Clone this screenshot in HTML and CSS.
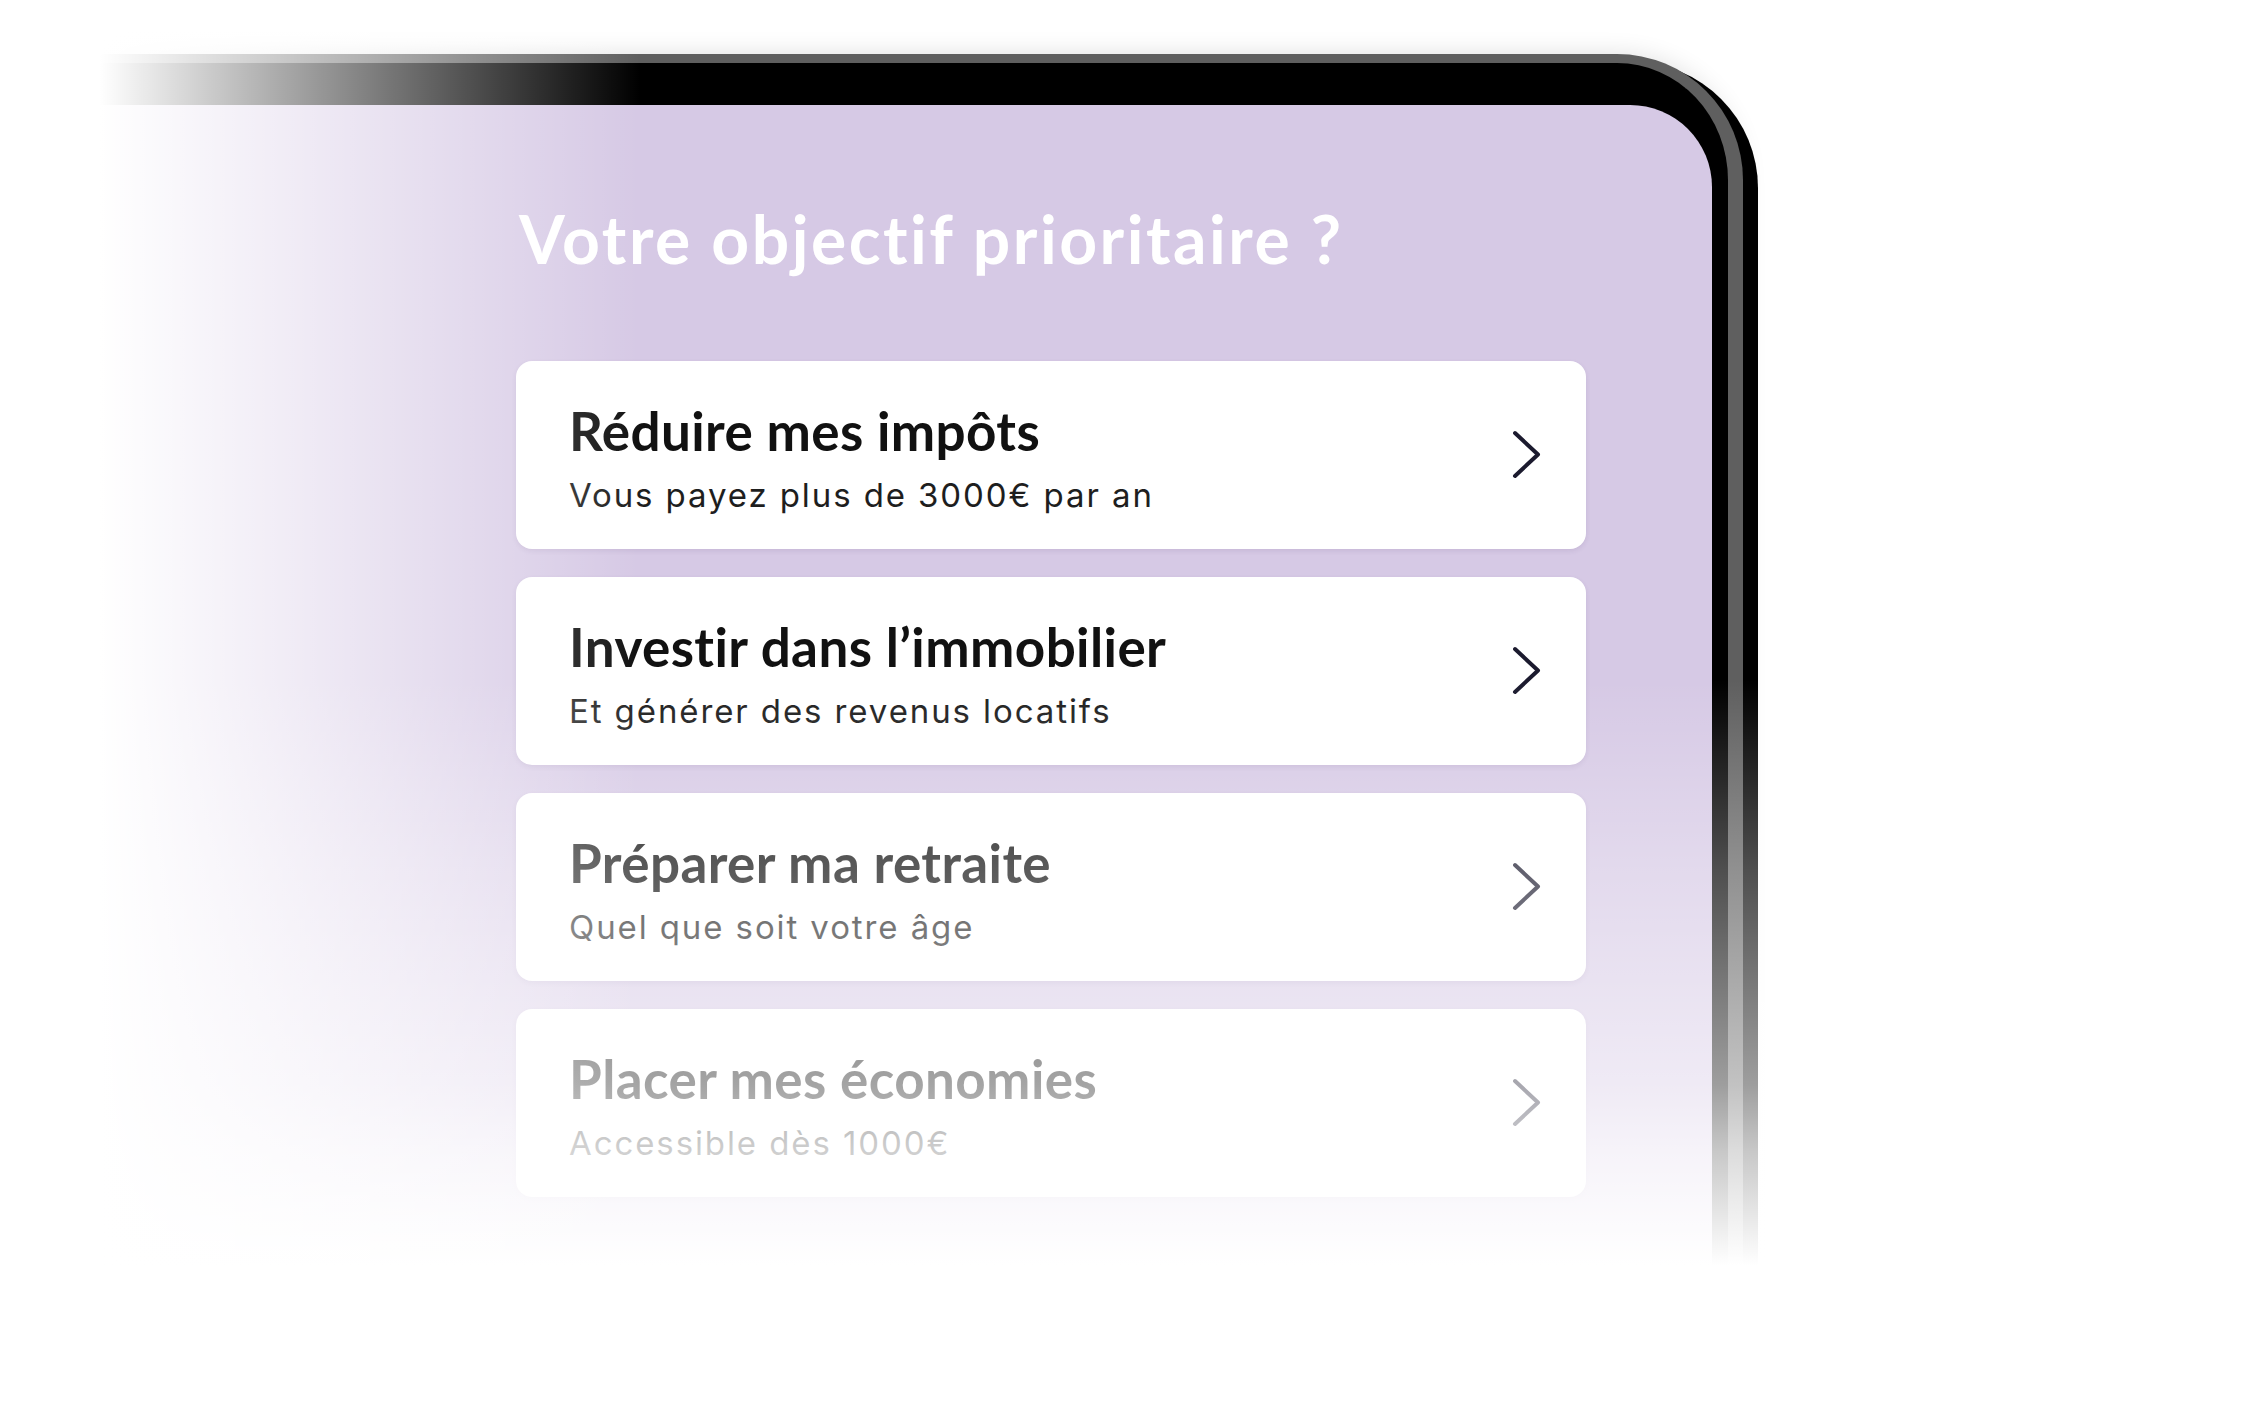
FILE: index.html
```html
<!DOCTYPE html>
<html lang="fr">

<head>
  <meta charset="UTF-8" />
  <meta name="viewport" content="width=device-width, initial-scale=1.0" />
  <title>Votre objectif prioritaire ?</title>
  <link rel="stylesheet" href="styles.css">
</head>

<body>
  <div class="stage">
    <div class="device">
      <div class="screen">
        <h1 class="question">Votre objectif prioritaire ?</h1>

        <ul class="choices">
          <li class="choice">
            <div class="choice-text">
              <span class="choice-title">Réduire mes impôts</span>
              <span class="choice-sub">Vous payez plus de 3000€ par an</span>
            </div>
            <svg class="chevron" width="30" height="50" viewBox="0 0 30 50">
              <path d="M3 3 L26 24.5 L3 46" />
            </svg>
          </li>
          <li class="choice">
            <div class="choice-text">
              <span class="choice-title">Investir dans l’immobilier</span>
              <span class="choice-sub">Et générer des revenus locatifs</span>
            </div>
            <svg class="chevron" width="30" height="50" viewBox="0 0 30 50">
              <path d="M3 3 L26 24.5 L3 46" />
            </svg>
          </li>
          <li class="choice">
            <div class="choice-text">
              <span class="choice-title">Préparer ma retraite</span>
              <span class="choice-sub">Quel que soit votre âge</span>
            </div>
            <svg class="chevron" width="30" height="50" viewBox="0 0 30 50">
              <path d="M3 3 L26 24.5 L3 46" />
            </svg>
          </li>
          <li class="choice">
            <div class="choice-text">
              <span class="choice-title">Placer mes économies</span>
              <span class="choice-sub">Accessible dès 1000€</span>
            </div>
            <svg class="chevron" width="30" height="50" viewBox="0 0 30 50">
              <path d="M3 3 L26 24.5 L3 46" />
            </svg>
          </li>
        </ul>
      </div>
    </div>

    <!-- white fade on the left and bottom -->
    <div class="fade"></div>
  </div>
</body>

</html>
```
FILE: styles.css
```css
* {
  box-sizing: border-box;
}

body {
  margin: 0;
  background: #fff;
  font-family: 'Lato', sans-serif;
  overflow: hidden;
}

.stage {
  position: relative;
  width: 2249px;
  height: 1402px;
  overflow: hidden;
}

.device {
  width: 1643px;
  height: 1400px;
  margin: 54px 0 0 100px;
  background: #000;
  border-top: 9px solid #5f5f5f;
  border-right: 15px solid #5f5f5f;
  border-radius: 0 126px 0 0;
  padding: 42px 16px 0 0;
  box-shadow: 15px 8px 0 #000, 0 0 24px rgba(0, 0, 0, 0.12);
}

.screen {
  height: 100%;
  background: #d6c9e5;
  border-radius: 0 82px 0 0;
  padding: 94px 0 0 416px;
}

.question {
  margin: 0 0 83px 3px;
  font-family: 'Lato', sans-serif;
  font-size: 66px;
  font-weight: 700;
  line-height: 1.2;
  color: #fff;
  letter-spacing: 2.5px;
  font-variant-ligatures: none;
}

.choices {
  list-style: none;
  margin: 0;
  padding: 0;
  width: 1070px;
  display: flex;
  flex-direction: column;
  gap: 28px;
}

.choice {
  height: 188px;
  display: flex;
  align-items: center;
  justify-content: space-between;
  padding: 0 44px 0 53px;
  background: #fff;
  border-radius: 16px;
  box-shadow: 0 2px 5px rgba(70, 40, 100, 0.1);
}

.choice-text {
  display: flex;
  flex-direction: column;
  gap: 13px;
  padding-top: 4px;
}

.choice-title {
  font-family: 'Lato', sans-serif;
  font-size: 53px;
  font-weight: 700;
  line-height: 1.2;
  color: #111;
  letter-spacing: 0.4px;
  font-variant-ligatures: none;
}

.choice-sub {
  font-family: 'Inter', sans-serif;
  font-size: 33px;
  line-height: 1.2;
  color: #1e1e1e;
  letter-spacing: 1.9px;
}

.chevron path {
  fill: none;
  stroke: #1b1a2e;
  stroke-width: 4;
  stroke-linecap: round;
  stroke-linejoin: round;
}

.fade {
  position: absolute;
  inset: 0;
  pointer-events: none;
  background:
    linear-gradient(to right, #fff 100px, rgba(255, 255, 255, 0) 640px),
    linear-gradient(to bottom,
      rgba(255, 255, 255, 0) 680px,
      rgba(255, 255, 255, 0.3) 865px,
      rgba(255, 255, 255, 0.62) 1085px,
      rgba(255, 255, 255, 0.78) 1150px,
      #fff 1265px);
}
```
